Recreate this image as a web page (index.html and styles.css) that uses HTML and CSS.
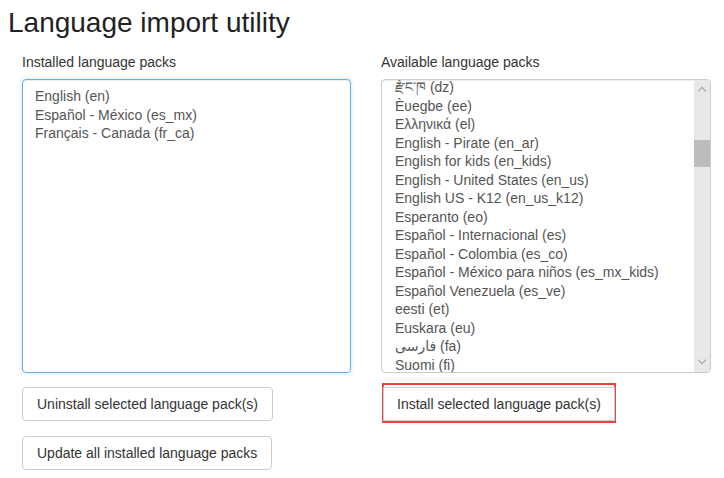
FILE: index.html
```html
<!DOCTYPE html>
<html lang="en">
<head>
<meta charset="UTF-8">
<meta name="viewport" content="width=device-width, initial-scale=1.0">
<title>Language import utility</title>
<link rel="stylesheet" href="styles.css">
</head>
<body>

<h1>Language import utility</h1>

<div class="columns">
    <div class="column">
        <label class="pack-label">Installed language packs</label>
        <div class="pack-list focused">
            <div class="pack-items">
                <div class="pack">English (en)</div>
                <div class="pack">Español - México (es_mx)</div>
                <div class="pack">Français - Canada (fr_ca)</div>
            </div>
        </div>
        <div class="actions">
            <button class="btn">Uninstall selected language pack(s)</button>
            <button class="btn">Update all installed language packs</button>
        </div>
    </div>

    <div class="column">
        <label class="pack-label">Available language packs</label>
        <div class="pack-list scrolled">
            <div class="pack-items">
                <div class="pack">རྫོང་ཁ (dz)</div>
                <div class="pack">Èʋegbe (ee)</div>
                <div class="pack">Ελληνικά (el)</div>
                <div class="pack">English - Pirate (en_ar)</div>
                <div class="pack">English for kids (en_kids)</div>
                <div class="pack">English - United States (en_us)</div>
                <div class="pack">English US - K12 (en_us_k12)</div>
                <div class="pack">Esperanto (eo)</div>
                <div class="pack">Español - Internacional (es)</div>
                <div class="pack">Español - Colombia (es_co)</div>
                <div class="pack">Español - México para niños (es_mx_kids)</div>
                <div class="pack">Español Venezuela (es_ve)</div>
                <div class="pack">eesti (et)</div>
                <div class="pack">Euskara (eu)</div>
                <div class="pack"><span dir="rtl">فارسی</span> (fa)</div>
                <div class="pack">Suomi (fi)</div>
            </div>
            <!-- fake scrollbar so it looks the same everywhere -->
            <div class="scrollbar">
                <span class="arrow up"></span>
                <div class="track"><div class="thumb"></div></div>
                <span class="arrow down"></span>
            </div>
        </div>
        <div class="actions">
            <div class="highlight">
                <button class="btn">Install selected language pack(s)</button>
            </div>
        </div>
    </div>
</div>

</body>
</html>
```

FILE: styles.css
```css
body {
    margin: 8px;
    font-family: "Liberation Sans", Arial, "DejaVu Sans", sans-serif;
    font-size: 14px;
    color: #333;
    background: #fff;
}
h1 {
    margin: 0;
    font-size: 28px;
    font-weight: normal;
    line-height: 30px;
    color: #222;
}
.columns {
    display: grid;
    grid-template-columns: 329px 330px;
    column-gap: 30px;
    padding-left: 14px;
    margin-top: 14px;
}
.pack-label {
    display: block;
    line-height: 20px;
    margin-bottom: 7px;
}
.pack-list {
    height: 292px;
    border: 1px solid #ccc;
    border-radius: 4px;
    box-shadow: inset 0 1px 1px rgba(0, 0, 0, .075);
    overflow: hidden;
    display: flex;
    color: #555;
}
.pack-list.focused {
    border-color: #66afe9;
    box-shadow: inset 0 1px 1px rgba(0, 0, 0, .075), 0 0 4px rgba(102, 175, 233, .35);
}
.pack-items {
    flex: 1;
    padding: 7px 12px;
}
.scrolled .pack-items {
    padding-top: 0;
    margin-top: -2px;
    padding-left: 13px;
}
.pack {
    line-height: 18.5px;
    white-space: nowrap;
}
.scrollbar {
    width: 16px;
    background: #e8e8e8;
    display: flex;
    flex-direction: column;
    align-items: center;
}
.track {
    flex: 1;
    width: 100%;
    padding-top: 46px;
}
.thumb {
    height: 27px;
    background: #bcbcbc;
}
.arrow {
    width: 5px;
    height: 5px;
    border-left: 1px solid #a0a0a0;
    border-top: 1px solid #a0a0a0;
}
.arrow.up {
    transform: rotate(45deg);
    margin-top: 8px;
}
.arrow.down {
    transform: rotate(225deg);
    margin-bottom: 9px;
}
.actions {
    display: flex;
    flex-direction: column;
    align-items: flex-start;
    gap: 15px;
    margin-top: 14px;
}
.btn {
    font-family: inherit;
    font-size: 14px;
    color: #333;
    background: #fff;
    border: 1px solid #ccc;
    border-radius: 4px;
    padding: 6px 14px;
    line-height: 20px;
    cursor: pointer;
}
.highlight {
    border: 2px solid #f04141;
    padding-top: 2px;
    margin-top: -4px;
    margin-left: 1px;
    display: flex;
}
.highlight .btn {
    margin: 0 -1px;
    padding: 6px 13px;
    border-radius: 0;
}
```
